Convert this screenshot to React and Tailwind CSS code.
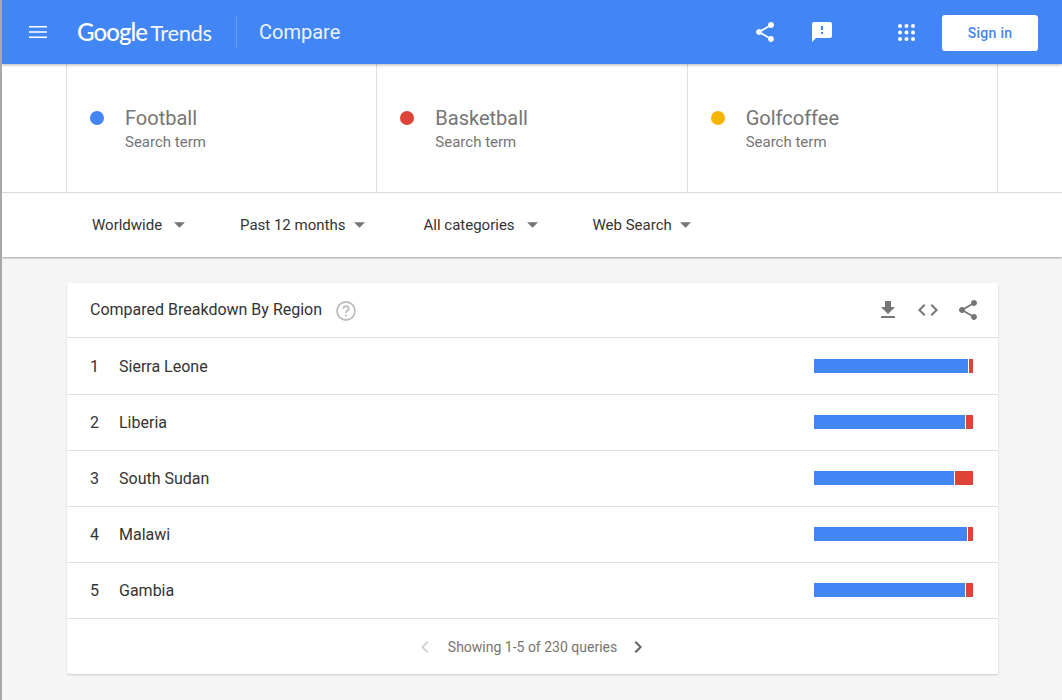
const roboto = { fontFamily: 'Roboto, "Liberation Sans", sans-serif' };

const terms = [
  { name: 'Football', dot: 'bg-[#4285f4]' },
  { name: 'Basketball', dot: 'bg-[#db4437]' },
  { name: 'Golfcoffee', dot: 'bg-[#f4b400]' },
];

const filters = [
  { label: 'Worldwide', cls: 'w-[148px]', gap: 'ml-[12px]' },
  { label: 'Past 12 months', cls: 'w-[183.5px]', gap: 'ml-[9px]' },
  { label: 'All categories', cls: 'w-[169px]', gap: 'ml-[12px]' },
  { label: 'Web Search', cls: 'w-[120px]', gap: 'ml-[8px]' },
];

const regions = [
  { rank: 1, name: 'Sierra Leone', blue: 154 },
  { rank: 2, name: 'Liberia', blue: 151 },
  { rank: 3, name: 'South Sudan', blue: 140 },
  { rank: 4, name: 'Malawi', blue: 153 },
  { rank: 5, name: 'Gambia', blue: 151 },
];

function ShareIcon({ className }) {
  return (
    <svg viewBox="0 0 24 24" className={className} fill="currentColor">
      <path d="M18 16.08c-.76 0-1.44.3-1.96.77L8.91 12.7c.05-.23.09-.46.09-.7s-.04-.47-.09-.7l7.05-4.11c.54.5 1.25.81 2.04.81 1.66 0 3-1.34 3-3s-1.34-3-3-3-3 1.34-3 3c0 .24.04.47.09.7L8.04 9.81C7.5 9.31 6.79 9 6 9c-1.66 0-3 1.34-3 3s1.34 3 3 3c.79 0 1.5-.31 2.04-.81l7.12 4.16c-.05.21-.08.43-.08.65 0 1.61 1.31 2.92 2.92 2.92s2.92-1.31 2.92-2.92-1.31-2.92-2.92-2.92z" />
    </svg>
  );
}

function Caret({ className }) {
  return (
    <svg viewBox="0 0 10 5" className={className} fill="currentColor">
      <path d="M0 0h10L5 5z" />
    </svg>
  );
}

function TopBar() {
  return (
    <header className="relative z-20 h-[64px] shrink-0 flex items-center bg-[#4285f4] text-white shadow-[0_1px_3px_rgba(0,0,0,0.3)]">
      <svg viewBox="0 0 18 12" className="ml-[27px] w-[18px] h-[12px]" fill="currentColor">
        <path d="M0 0h18v1.6H0zM0 5.2h18v1.6H0zM0 10.4h18V12H0z" />
      </svg>
      <div className="ml-[30px] w-[160px] flex items-baseline text-[24px] leading-none tracking-[-0.9px] whitespace-nowrap" style={{ fontFamily: 'Lato, sans-serif' }}>
        <span className="font-medium">Google</span>
        <span className="ml-[3px] text-[22px] tracking-[-0.4px] opacity-95">Trends</span>
      </div>
      <div className="ml-[-1px] w-px h-[32px] bg-white/20" />
      <div className="ml-[22px] text-[20px] text-white/90" style={roboto}>Compare</div>
      <div className="flex-1" />
      <ShareIcon className="w-[24px] h-[24px] mr-[33px]" />
      <svg viewBox="0 0 24 24" className="w-[24px] h-[24px] mr-[64px]" fill="currentColor">
        <path d="M20 2H4c-1.1 0-2 .9-2 2v18l4-4h14c1.1 0 2-.9 2-2V4c0-1.1-.9-2-2-2zm-7 12h-2v-2h2v2zm0-4h-2V6h2v4z" />
      </svg>
      <svg viewBox="0 0 17 17" className="w-[17px] h-[17px] mr-[27px] mt-[1px]" fill="currentColor">
        {[2, 8.5, 15].flatMap((y) =>
          [2, 8.5, 15].map((x) => <circle key={`${x}-${y}`} cx={x} cy={y} r="2" />)
        )}
      </svg>
      <button className="w-[96px] h-[36px] mr-[24px] mt-[2px] rounded-[3px] bg-white text-[#4285f4] text-[14px] font-medium tracking-[0.3px]" style={roboto}>
        Sign in
      </button>
    </header>
  );
}

function TermRow() {
  return (
    <div className="h-[129px] shrink-0 bg-white border-b border-[#e0e0e0] pl-[64px]">
      <div className="flex w-[932px] h-full border-r border-[#e0e0e0]">
        {terms.map((t) => (
          <div key={t.name} className="flex-1 border-l border-[#e0e0e0] pl-[23px] pt-[40px] flex items-start">
            <div className={`w-[14px] h-[14px] rounded-full mt-[7px] ${t.dot}`} />
            <div className="ml-[21px]">
              <div className="text-[20px] leading-[28px] text-[#757575]">{t.name}</div>
              <div className="text-[15px] leading-[20px] text-[#757575]">Search term</div>
            </div>
          </div>
        ))}
      </div>
    </div>
  );
}

function FilterRow() {
  return (
    <div className="relative z-10 h-[64px] shrink-0 bg-white flex items-center pl-[90px] shadow-[0_1px_2px_rgba(0,0,0,0.35)]">
      {filters.map((f) => (
        <div key={f.label} className={`flex items-center shrink-0 ${f.cls}`}>
          <span className="text-[15px] text-[#333] whitespace-nowrap">{f.label}</span>
          <Caret className={`w-[11px] h-[6px] text-[#757575] ${f.gap}`} />
        </div>
      ))}
    </div>
  );
}

function RegionRow({ region }) {
  return (
    <div className="h-[56px] flex items-center border-b border-[#e0e0e0] pl-[23px]">
      <span className="w-[29px] text-[16px] text-[#333]">{region.rank}</span>
      <span className="flex-1 text-[16px] text-[#333]">{region.name}</span>
      <div className="w-[159px] h-[14px] mr-[25px] mb-[2px] flex">
        <div className="h-full bg-[#4285f4]" style={{ width: region.blue }} />
        <div className="h-full flex-1 ml-px bg-[#db4437]" />
      </div>
    </div>
  );
}

function RegionCard() {
  return (
    <section className="ml-[65px] mt-[26px] w-[931px] h-[391px] bg-white rounded-[2px] shadow-[0_1px_2px_rgba(0,0,0,0.18)] flex flex-col">
      <div className="h-[55px] shrink-0 flex items-center border-b border-[#e0e0e0] pl-[23px]">
        <span className="text-[16px] text-[#333]">Compared Breakdown By Region</span>
        <svg viewBox="0 0 20 20" className="ml-[14px] w-[20px] h-[20px] mt-[1px] text-[#bdbdbd]">
          <circle cx="10" cy="10" r="9" fill="none" stroke="currentColor" strokeWidth="1.8" />
          <path d="M7.3 7.8c0-1.5 1.2-2.6 2.7-2.6s2.7 1.1 2.7 2.5c0 1.8-2.7 2-2.7 4.3" fill="none" stroke="currentColor" strokeWidth="1.8" />
          <rect x="9.1" y="13.4" width="1.8" height="1.8" fill="currentColor" />
        </svg>
        <div className="flex-1" />
        <svg viewBox="0 0 24 24" className="w-[24px] h-[24px] text-[#757575] mr-[16px]" fill="currentColor">
          <path d="M19 9h-4V3H9v6H5l7 7 7-7zM5 18v2h14v-2H5z" />
        </svg>
        <svg viewBox="0 0 24 24" className="w-[24px] h-[24px] text-[#757575] mr-[16px]" fill="currentColor">
          <path d="M9.4 16.6 4.8 12l4.6-4.6L8 6l-6 6 6 6 1.4-1.4zm5.2 0 4.6-4.6-4.6-4.6L16 6l6 6-6 6-1.4-1.4z" />
        </svg>
        <ShareIcon className="w-[24px] h-[24px] text-[#757575] mr-[18px]" />
      </div>
      <div className="pt-px">
        {regions.map((r) => (
          <RegionRow key={r.rank} region={r} />
        ))}
      </div>
      <div className="flex-1 flex items-center justify-center pt-px pr-[2px] text-[14px] text-[#757575]">
        <svg viewBox="0 0 24 24" className="w-[24px] h-[24px] text-[#d3d3d3] mr-[11px]" fill="currentColor">
          <path d="M15.4 7.4 14 6l-6 6 6 6 1.4-1.4-4.6-4.6z" />
        </svg>
        <span>Showing 1-5 of 230 queries</span>
        <svg viewBox="0 0 24 24" className="w-[24px] h-[24px] text-[#616161] ml-[9px]" fill="currentColor">
          <path d="M10 6 8.6 7.4l4.6 4.6-4.6 4.6L10 18l6-6z" />
        </svg>
      </div>
    </section>
  );
}

export default function App() {
  return (
    <div className="h-[700px] overflow-hidden flex flex-col bg-[#f5f5f5] border-l-2 border-[#a8a8a8]" style={roboto}>
      <TopBar />
      <TermRow />
      <FilterRow />
      <RegionCard />
    </div>
  );
}
